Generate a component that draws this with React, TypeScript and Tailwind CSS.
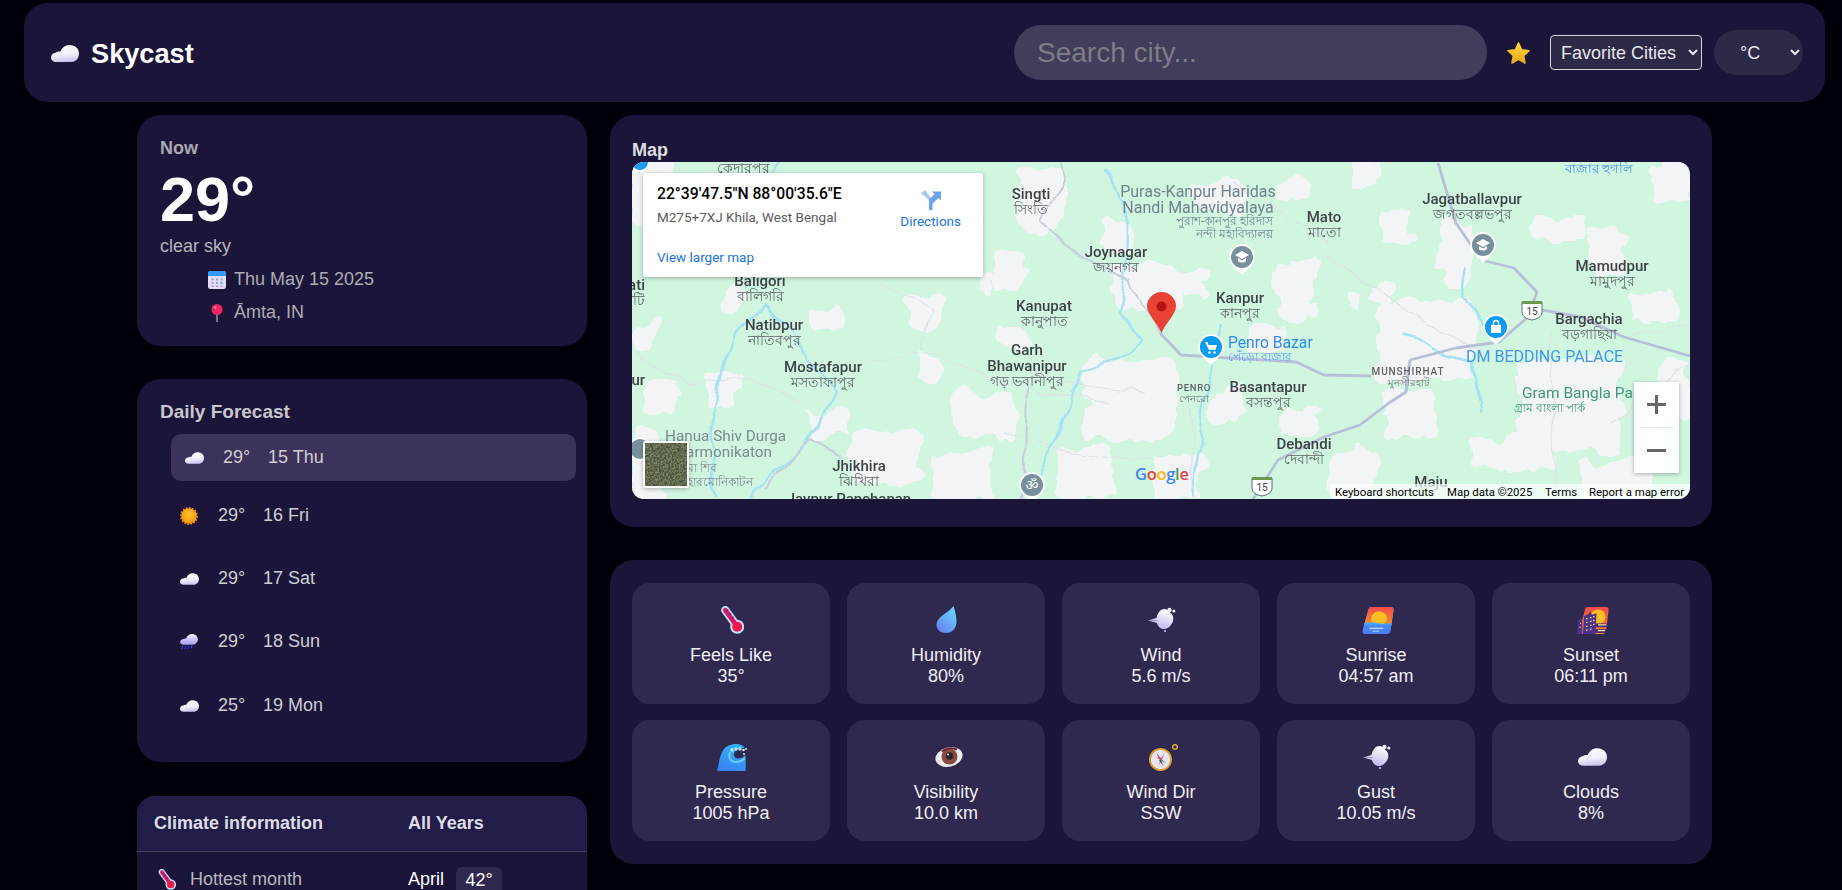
import type { ReactNode } from "react";

const SANS = "font-['Liberation_Sans',Arial,sans-serif]";

const FORECAST = [
  { icon: "cloud", temp: "29°", day: "15 Thu", active: true, mb: "mb-[11px]" },
  { icon: "sun", temp: "29°", day: "16 Fri", active: false, mb: "mb-[16px]" },
  { icon: "cloud", temp: "29°", day: "17 Sat", active: false, mb: "mb-[16px]" },
  { icon: "rain", temp: "29°", day: "18 Sun", active: false, mb: "mb-[17px]" },
  { icon: "cloud", temp: "25°", day: "19 Mon", active: false, mb: "" },
];

const STATS = [
  { icon: "thermo", size: "h-[28px] w-[25px]", label: "Feels Like", value: "35°" },
  { icon: "drop", size: "h-[28px] w-[23px]", label: "Humidity", value: "80%" },
  { icon: "wind", size: "h-[28px] w-[30px]", label: "Wind", value: "5.6 m/s" },
  { icon: "sunrise", size: "ml-[4px] h-[27px] w-[32px]", label: "Sunrise", value: "04:57 am" },
  { icon: "sunset", size: "ml-[3px] h-[27px] w-[32px]", label: "Sunset", value: "06:11 pm" },
  { icon: "wave", size: "ml-[2px] h-[27px] w-[30px]", label: "Pressure", value: "1005 hPa" },
  { icon: "eye", size: "ml-[5px] h-[22px] w-[28px]", label: "Visibility", value: "10.0 km" },
  { icon: "compass", size: "h-[27px] w-[33px]", label: "Wind Dir", value: "SSW" },
  { icon: "wind", size: "h-[28px] w-[30px]", label: "Gust", value: "10.05 m/s" },
  { icon: "cloud2", size: "ml-[3px] h-[18px] w-[29px]", label: "Clouds", value: "8%" },
];

// gradients shared by the emoji drawings
function IconDefs() {
  return (
    <svg className="absolute h-0 w-0" aria-hidden="true">
      <defs>
        <linearGradient id="g-cloud" x1="0.3" y1="0" x2="0.5" y2="1">
          <stop offset="0" stopColor="#ffffff" />
          <stop offset="0.6" stopColor="#f1edfa" />
          <stop offset="1" stopColor="#cbc1ec" />
        </linearGradient>
        <linearGradient id="g-rain" x1="0.4" y1="0" x2="0.4" y2="1">
          <stop offset="0" stopColor="#f4f0ff" />
          <stop offset="1" stopColor="#a59bf0" />
        </linearGradient>
        <radialGradient id="g-sun" cx="0.5" cy="0.4" r="0.6">
          <stop offset="0" stopColor="#fcc52b" />
          <stop offset="1" stopColor="#f0930f" />
        </radialGradient>
        <linearGradient id="g-drop" x1="0.8" y1="0.1" x2="0.2" y2="1">
          <stop offset="0" stopColor="#63d4ff" />
          <stop offset="1" stopColor="#6a7ef5" />
        </linearGradient>
        <linearGradient id="g-sky" x1="0" y1="0" x2="0" y2="1">
          <stop offset="0" stopColor="#ef4b4b" />
          <stop offset="1" stopColor="#f98b2c" />
        </linearGradient>
        <linearGradient id="g-sea" x1="0" y1="0" x2="0" y2="1">
          <stop offset="0" stopColor="#48b4ff" />
          <stop offset="1" stopColor="#4a7cf5" />
        </linearGradient>
        <linearGradient id="g-wave" x1="0.6" y1="0" x2="0.2" y2="1">
          <stop offset="0" stopColor="#2fb2f5" />
          <stop offset="1" stopColor="#3a80f6" />
        </linearGradient>
        <linearGradient id="g-star" x1="0.5" y1="0" x2="0.5" y2="1">
          <stop offset="0" stopColor="#fdd835" />
          <stop offset="1" stopColor="#e8a81c" />
        </linearGradient>
        <linearGradient id="g-wind" x1="0.7" y1="0" x2="0.3" y2="1">
          <stop offset="0" stopColor="#ffffff" />
          <stop offset="1" stopColor="#bdb0ec" />
        </linearGradient>
      </defs>
    </svg>
  );
}

function Emoji({ name, className }: { name: string; className?: string }) {
  switch (name) {
    case "cloud":
    case "cloud2":
      return (
        <svg viewBox="0 0 28 17" className={className}>
          <path
            d="M5.5 17C2 17 0 15 0 12.5 0 10 2 8 4.5 7.8 6 6.5 8 6.3 9.5 6.6 11 2.5 14.5 0 18.5 0 24 0 28 3.5 28 8.5 28 13.5 24.5 17 20 17Z"
            fill="url(#g-cloud)"
          />
          <path d="M10.5 7C9 9 9 12 10 14" fill="none" stroke="#dcd6f0" strokeWidth="0.8" />
        </svg>
      );
    case "sun":
      return (
        <svg viewBox="0 0 20 20" className={className}>
          <circle cx="10" cy="10" r="9" fill="none" stroke="#ef7d1a" strokeWidth="2" strokeDasharray="2 1.5" />
          <circle cx="10" cy="10" r="8.6" fill="url(#g-sun)" />
        </svg>
      );
    case "rain":
      return (
        <svg viewBox="0 0 20 18" className={className}>
          <path
            d="M4 12C1.5 12 0 10.8 0 9 0 7.3 1.4 6 3.2 5.8 4.2 5 5.4 4.8 6.8 5 7.8 2 10.4 0 13.4 0 17.2 0 20 2.6 20 6 20 9.6 17.4 12 14 12Z"
            fill="url(#g-rain)"
          />
          <path d="M3 13l-1 4M6.5 13l-1 4M10 13l-1 4M13.5 13l-1 3" stroke="#3d35f0" strokeWidth="1.3" />
        </svg>
      );
    case "thermo":
      return (
        <svg viewBox="-2.5 0 24 27" className={className}>
          <path d="M3.5 4 14 18.500" stroke="#bfe3f4" strokeWidth="8" strokeLinecap="round" />
          <circle cx="15" cy="20" r="6.800" fill="#bfe3f4" />
          <path d="M3.500 4 14 18.500" stroke="#d9176e" strokeWidth="4.600" strokeLinecap="round" />
          <circle cx="15" cy="20" r="4.800" fill="#f5164e" />
          <path d="M6.500 3.500l-2 1.500M9 7l-2 1.500M11.500 10.500l-2 1.500" stroke="#6b2150" strokeWidth="1.100" />
        </svg>
      );
    case "drop":
      return (
        <svg viewBox="0 0 22 28" className={className}>
          <path d="M18 0C19.500 5 21 10 21 15.500 21 22.500 16.500 27 10.500 27 5 27 1 23.500 1 19 1 14 5 11 9.500 7.500 13 5 16 3 18 0Z" fill="url(#g-drop)" />
        </svg>
      );
    case "wind":
      return (
        <svg viewBox="-2 0 30 26" className={className}>
          <path
            d="M0 13.500 8.500 11C9.500 6 12.500 2 16 2 19 1.500 20.500 4 22.500 6 25.500 8 26 12 24.500 15.500 22.500 19.500 19 22.500 15 22 11.500 21.500 9.500 18.500 9 16Z"
            fill="url(#g-wind)"
          />
          <path d="M1 13.500 9.500 13.500" stroke="#8f88b0" strokeWidth="0.8" />
          <circle cx="21.500" cy="3" r="2.200" fill="#efeaf9" />
          <circle cx="25.800" cy="4" r="1.500" fill="#ffffff" />
          <circle cx="17" cy="24" r="1.100" fill="#c9bef0" />
        </svg>
      );
    case "sunrise":
      return (
        <svg viewBox="0 0 30 28" preserveAspectRatio="none" className={className}>
          <path d="M6 2.500Q6.400 0 9 0H27Q30 0 29.600 3L26.800 25Q26.400 28 23 28H3Q0 28 .4 25Z" fill="url(#g-sea)" />
          <path d="M6 2.500Q6.400 0 9 0H27Q30 0 29.600 3L27.500 19H2Z" fill="url(#g-sky)" />
          <circle cx="16" cy="12" r="7.500" fill="#fbbf24" />
          <path d="M2.300 16.500Q8 15 14 16.500T27.800 16.500L27 21H1.500Z" fill="url(#g-sea)" />
          <path d="M7 22H20M10 25H16" stroke="#dceeff" strokeWidth="1" />
        </svg>
      );
    case "sunset":
      return (
        <svg viewBox="0 0 32 28" preserveAspectRatio="none" className={className}>
          <path d="M8 2.500Q8.400 0 11 0H29Q32 0 31.600 3L29 25Q28.600 28 25 28H5Q2 28 2.400 25Z" fill="url(#g-sky)" />
          <circle cx="21" cy="10" r="7.500" fill="#fbbf24" />
          <path d="M18 17H31L30.500 21H18ZM18 23H29.500L29 27H18Z" fill="#432c7a" />
          <path d="M21 18.500H29.500M21 24.500H28" stroke="#fde68a" strokeWidth="1.200" />
          <path d="M1 14 5 12 5.500 28H1.500Q0 28 .2 26ZM7 9.500 12 7 13 4.500 15 8 19.500 6.500 18.500 28H6Z" fill="#4e3188" />
          <path d="M3 17h1M2.500 21h1M9 12h1.500M13 11h1.500M16 10h1.500M9 16h1.500M13 15h1.500M16 14h1.500M9 20h1.500M13 19h1.500M16 18h1.500M9 24h1.500M13 23h1.500" stroke="#fde68a" strokeWidth="1.300" />
        </svg>
      );
    case "wave":
      return (
        <svg viewBox="0 0 30 27" className={className}>
          <path d="M0 27C2 20 2.500 13 5 8 8 2 14 0 19 0 23 0 26 1.500 28 4 24 3.500 18 5 17 10 16.500 13 19 15 22 14.500 25 14 27 12.500 28.500 11 28.500 17 29 22 28.500 27Z" fill="url(#g-wave)" />
          <path d="M13.500 8C11 11.500 12 16.500 17.500 18 21 18.500 25 17 28 14" fill="none" stroke="#72cdfb" strokeWidth="1.800" />
          <circle cx="15" cy="6" r="1.700" fill="#b5e6ff" />
          <circle cx="19" cy="5" r="1.700" fill="#b5e6ff" />
          <circle cx="23" cy="5" r="1.700" fill="#b5e6ff" />
          <circle cx="26.500" cy="6" r="1.300" fill="#d5f1ff" />
          <circle cx="29" cy="5" r="0.900" fill="#d5f1ff" />
          <circle cx="27" cy="10" r="0.900" fill="#d5f1ff" />
        </svg>
      );
    case "eye":
      return (
        <svg viewBox="0 0 28 22" className={className}>
          <ellipse cx="14" cy="11" rx="13.800" ry="9.600" transform="rotate(-14 14 11)" fill="#efeaf0" />
          <circle cx="14.500" cy="10.500" r="8" fill="#8c4b3c" />
          <path d="M7 5.500Q14 0 22 3.500" stroke="#6b2b33" strokeWidth="2" fill="none" />
          <circle cx="14.500" cy="10" r="3.800" fill="#2e2430" />
          <circle cx="13" cy="8.500" r="1.100" fill="#ffffff" />
        </svg>
      );
    case "compass":
      return (
        <svg viewBox="-3 0 33 27" className={className}>
          <ellipse cx="12.500" cy="15.500" rx="11.500" ry="11.500" transform="rotate(24 12.500 15.500)" fill="#dc9a28" />
          <ellipse cx="12.500" cy="15.500" rx="9.600" ry="9.600" transform="rotate(24 12.500 15.500)" fill="#e8e5ee" />
          <circle cx="27" cy="3" r="2.300" fill="none" stroke="#e2a52d" strokeWidth="1.500" />
          <path d="M12.500 16 10.500 21.500 13.500 17 18.500 19 14 15.500 16.500 10 12.500 14.500 7 12.500Z" fill="#85828f" />
          <path d="M14 15.500 8.500 9 11 15Z" fill="#e83070" />
          <path d="M12.500 15.500 15.500 22 11 16.500Z" fill="#3d3d47" />
        </svg>
      );
    case "star":
      return (
        <svg viewBox="0 0 23 22" className={className}>
          <path
            d="M11.500 1 14.600 7.800 22 8.700 16.600 13.700 18 21 11.500 17.400 5 21 6.400 13.700 1 8.700 8.400 7.800Z"
            fill="url(#g-star)"
            stroke="url(#g-star)"
            strokeWidth="1.600"
            strokeLinejoin="round"
          />
        </svg>
      );
    case "calendar":
      return (
        <svg viewBox="0 0 18 18" className={className}>
          <rect width="18" height="18" rx="2.500" fill="#e2dcf5" />
          <path d="M0 5V2.500A2.500 2.500 0 0 1 2.500 0H15.500A2.500 2.500 0 0 1 18 2.500V5Z" fill="#3498f8" />
          <path d="M3.500 7.500h2v2h-2ZM8 7.500h2v2H8ZM12.500 7.500h2v2h-2ZM3.500 11h2v2h-2ZM8 11h2v2H8ZM3.500 14.500h2v1.500h-2ZM8 14.500h2v1.500H8ZM12.500 14.500h2v1.500h-2Z" fill="#a69cc9" />
          <path d="M12.500 11h2v2h-2Z" fill="#59a9f5" />
        </svg>
      );
    case "pin":
      return (
        <svg viewBox="0 0 14 18" className={className}>
          <path d="M7 9V18" stroke="#a9a4b4" strokeWidth="1.300" />
          <circle cx="7" cy="5.500" r="5.500" fill="#f0245f" />
          <circle cx="5.200" cy="3.500" r="1.300" fill="#ff8fb1" />
        </svg>
      );
    default:
      return null;
  }
}

function Panel({ className, children }: { className?: string; children: ReactNode }) {
  return <section className={`rounded-[24px] bg-[#1b1639] ${className ?? ""}`}>{children}</section>;
}

type Lbl = [number, number, string, string?];

const PLACES: Lbl[] = [
  [399, 37, "Singti", "সিংতি"],
  [128, 124, "Baligori", "বালিগরি"],
  [142, 168, "Natibpur", "নাতিবপুর"],
  [191, 210, "Mostafapur", "মসতাফাপুর"],
  [484, 95, "Joynagar", "জয়নগর"],
  [412, 149, "Kanupat", "কানুপাত"],
  [395, 193, "Garh"],
  [395, 209, "Bhawanipur", "গড় ভবানীপুর"],
  [227, 309, "Jhikhira", "ঝিখিরা"],
  [692, 60, "Mato", "মাতো"],
  [840, 42, "Jagatballavpur", "জগতবল্লভপুর"],
  [980, 109, "Mamudpur", "মামুদপুর"],
  [608, 141, "Kanpur", "কানপুর"],
  [957, 162, "Bargachia", "বড়গাছিয়া"],
  [636, 230, "Basantapur", "বসন্তপুর"],
  [672, 287, "Debandi", "দেবান্দী"],
  [799, 325, "Maju"],
  [217, 342, "Jaypur Panchanan"],
];

// built-up areas of the tiles, as boxes that the displacement filter roughens
const PATCHES = [
  [345, 115, 360, 130], [277, 135, 310, 165], [288, 191, 306, 215], [75, 211, 106, 245],
  [177, 248, 217, 275], [324, 231, 381, 278], [367, 165, 392, 185], [385, 8, 430, 70],
  [452, 198, 545, 278], [481, 105, 545, 145], [2, 158, 24, 191], [177, 145, 209, 168],
  [13, 218, 45, 251], [90, 130, 112, 150], [528, 108, 574, 135], [646, 101, 685, 158],
  [717, 125, 731, 145], [739, 121, 757, 138], [746, 138, 842, 218], [807, 61, 842, 125],
  [885, 198, 992, 291], [749, 228, 807, 275], [842, 275, 920, 308], [957, 71, 992, 115],
  [903, 55, 957, 75], [1021, 1, 1058, 38], [721, 1, 749, 21], [649, 15, 678, 38],
  [578, 225, 617, 258], [649, 248, 685, 275], [749, 45, 778, 81], [617, 165, 653, 191],
  [220, 270, 290, 320], [300, 290, 360, 337], [425, 285, 480, 337], [520, 290, 570, 337],
  [0, 270, 30, 337], [700, 290, 745, 337], [950, 300, 1020, 337], [1000, 130, 1040, 160],
  [360, 90, 395, 125], [560, 20, 610, 50], [0, 0, 40, 60], [465, 60, 500, 90], [1030, 200, 1058, 260],
];

const ROADS = [
  "M528 171 L549 193 L596 196 L664 200 L692 213 L739 214",
  "M778 198 L824 186 L867 180 L896 155 L910 148 L949 155 L992 175 L1058 194",
  "M896 155 L905 130 L882 106 L849 98 L824 61 L806 1",
  "M621 337 L646 298 L692 275 L728 263 L757 241 L774 230 L778 198",
];
const MINOR_ROADS = [
  "M427 0 L433 18 L411 58 L431 81 L452 98 L499 118 L506 138 L531 171",
  "M134 325 L181 278 L209 293",
  "M395 225 L392 337",
];
const LANES = [
  "M0 190 L60 225 L120 215 L170 240",
  "M400 210 L460 225 L510 230",
  "M240 200 L300 190 L380 225 L480 240",
  "M690 90 L790 160 L850 190",
  "M600 20 L700 80",
  "M920 170 L925 337",
  "M560 240 L560 337",
  "M1000 170 L1058 165",
  "M980 260 L1058 200",
  "M250 120 L300 150 L290 190",
  "M370 270 L440 290 L520 300",
];
const RIVERS = [
  "M134 141 L102 171 L92 208 L77 278 L82 337",
  "M470 8 L495 41 L492 125 L488 151 L509 178 L495 191 L449 211 L427 275 L406 311",
  "M134 141 L160 170 L178 200 L205 230 L196 250 L170 290 L125 325 L118 337",
  "M150 0 L135 20",
  "M590 160 L575 220 L560 337",
  "M835 105 L830 135 L855 165",
  "M770 170 L800 190 L840 200 L850 250",
];

function PoiPin({ x, y, fill, children }: { x: number; y: number; fill: string; children?: ReactNode }) {
  return (
    <g transform={`translate(${x} ${y})`}>
      <path d="M-13 0A13 13 0 1 1 13 0C13 7 5 13 0 18-5 13-13 7-13 0Z" fill="#ffffff" opacity="0.92" />
      <circle r="11" fill={fill} />
      {children}
    </g>
  );
}

function Shield({ x, y }: { x: number; y: number }) {
  return (
    <g transform={`translate(${x} ${y})`}>
      <path d="M-10 -8H10V2C10 7 5 9 0 10-5 9-10 7-10 2Z" fill="#ffffff" stroke="#5d6d7a" strokeWidth="1" />
      <path d="M-10 -9H10V-6H-10Z" fill="#6b9a4f" />
      <text textAnchor="middle" y="5" fontSize="10" fontFamily="Roboto, sans-serif" fill="#3c4043">15</text>
    </g>
  );
}

function MapTiles() {
  return (
    <svg viewBox="0 0 1058 337" className="absolute inset-0 h-full w-full" fontFamily="Roboto, 'Noto Sans', sans-serif">
      <defs>
        <filter id="soft"><feGaussianBlur stdDeviation="0.35" /></filter>
        <filter id="rough" x="-5%" y="-5%" width="110%" height="110%">
          <feTurbulence type="fractalNoise" baseFrequency="0.035" numOctaves="3" seed="7" result="n" />
          <feDisplacementMap in="SourceGraphic" in2="n" scale="26" xChannelSelector="R" yChannelSelector="G" />
          <feGaussianBlur stdDeviation="0.7" />
        </filter>
        <filter id="wiggle" x="-5%" y="-5%" width="110%" height="110%">
          <feTurbulence type="fractalNoise" baseFrequency="0.03" numOctaves="2" seed="3" result="n" />
          <feDisplacementMap in="SourceGraphic" in2="n" scale="14" xChannelSelector="R" yChannelSelector="G" />
          <feGaussianBlur stdDeviation="0.35" />
        </filter>
      </defs>
      <rect width="1058" height="337" fill="#d0f6e0" />
      <g fill="#f2f4f6" filter="url(#rough)">
        {PATCHES.map(([a, b, c, d]) => (
          <rect key={`${a}-${b}`} x={a} y={b} width={c - a} height={d - b} rx="5" />
        ))}
      </g>
      <g fill="none" strokeLinejoin="round" filter="url(#wiggle)">
        {LANES.map((d) => <path key={d} d={d} stroke="#dde3e6" strokeWidth="1.200" />)}
        {RIVERS.map((d) => <path key={d} d={d} stroke="#a5e2f6" strokeWidth="2.400" />)}
        {MINOR_ROADS.map((d) => <path key={d} d={d} stroke="#c8cfdc" strokeWidth="2.200" />)}
      </g>
      <g fill="none" strokeLinejoin="round" filter="url(#soft)">
        {ROADS.map((d) => <path key={d} d={d} stroke="#b6c0d8" strokeWidth="2.800" />)}
      </g>
      <g filter="url(#soft)">
        {PLACES.map(([x, y, name, bn]) => (
          <g key={name} textAnchor="middle">
            <text x={x} y={y} fontSize="15" fontWeight="500" fill="#3f4347">{name}</text>
            {bn && <text x={x} y={y + 15} fontSize="14" fill="#5f6368">{bn}</text>}
          </g>
        ))}
        <text x="566" y="35" textAnchor="middle" fontSize="16" fill="#71838f">Puras-Kanpur Haridas</text>
        <text x="566" y="51" textAnchor="middle" fontSize="16" fill="#71838f">Nandi Mahavidyalaya</text>
        <text x="641" y="63" textAnchor="end" fontSize="12" fill="#71838f">পুরাশ-কানপুর হরিদাস</text>
        <text x="641" y="76" textAnchor="end" fontSize="12" fill="#71838f">নন্দী মহাবিদ্যালয়</text>
        <text x="33" y="279" fontSize="15.300" fill="#7c8a90">Hanua Shiv Durga</text>
        <text x="140" y="295" textAnchor="end" fontSize="15.300" fill="#7c8a90">Harmonikaton</text>
        <text x="55" y="310" fontSize="12" fill="#7c8a90">মা শিব</text>
        <text x="55" y="324" fontSize="12" fill="#7c8a90">হারমোনিকাটন</text>
        <text x="0" y="128" textAnchor="middle" fontSize="15" fontWeight="500" fill="#3f4347">Sati</text>
        <text x="0" y="143" textAnchor="middle" fontSize="14" fill="#5f6368">সাটি</text>
        <text x="2" y="223" textAnchor="middle" fontSize="15" fontWeight="500" fill="#3f4347">pur</text>
        <text x="111" y="11" textAnchor="middle" fontSize="14" fill="#5f6368">কেদারপুর</text>
        <text x="967" y="11" textAnchor="middle" fontSize="13" fill="#4a90e8">বাজার হুগলি</text>
        <text x="596" y="186" fontSize="15.700" fill="#2e8cf0">Penro Bazar</text>
        <text x="596" y="199" fontSize="12" fill="#5fa5f2">পেঁড়ো বাজার</text>
        <text x="834" y="200" fontSize="16" fill="#3f96f0">DM BEDDING PALACE</text>
        <text x="776" y="213" textAnchor="middle" fontSize="10" fontWeight="500" letterSpacing="0.9" fill="#5f6368">MUNSHIRHAT</text>
        <text x="776" y="224" textAnchor="middle" fontSize="10" fill="#70757a">মুনসীরহাট</text>
        <text x="562" y="229" textAnchor="middle" fontSize="9.500" fontWeight="500" letterSpacing="0.7" fill="#5f6368">PENRO</text>
        <text x="562" y="240" textAnchor="middle" fontSize="9.500" fill="#70757a">পেনরো</text>
        <text x="890" y="236" fontSize="15.500" fill="#3d9a74">Gram Bangla Park</text>
        <text x="882" y="250" fontSize="12" fill="#3d9a74">গ্রাম বাংলা পার্ক</text>
      </g>
      <PoiPin x={610} y={95} fill="#78909c">
        <path d="M-7 -2 0 -6 7 -2 0 2ZM-4 1V4C-2 6 2 6 4 4V1L0 3.500Z" fill="#ffffff" />
      </PoiPin>
      <PoiPin x={851} y={83} fill="#78909c">
        <path d="M-7 -2 0 -6 7 -2 0 2ZM-4 1V4C-2 6 2 6 4 4V1L0 3.500Z" fill="#ffffff" />
      </PoiPin>
      <PoiPin x={579} y={185} fill="#0a9cf5">
        <path d="M-6 -5H-3.500L-2.500 -2H6L4.500 3H-2Z" fill="#ffffff" />
        <circle cx="-1.500" cy="5.500" r="1.300" fill="#ffffff" />
        <circle cx="3.500" cy="5.500" r="1.300" fill="#ffffff" />
      </PoiPin>
      <PoiPin x={864} y={165} fill="#0a9cf5">
        <path d="M-5 -2H5V6H-5Z" fill="#ffffff" />
        <path d="M-2.500 -2V-4A2.500 2.500 0 0 1 2.500 -4V-2" fill="none" stroke="#ffffff" strokeWidth="1.300" />
      </PoiPin>
      <PoiPin x={400} y={323} fill="#78909c">
        <text textAnchor="middle" y="5" fontSize="14" fill="#ffffff">ॐ</text>
      </PoiPin>
      <circle cx="8" cy="0" r="9" fill="#1a9bf0" stroke="#ffffff" strokeWidth="2" />
      <circle cx="8" cy="287" r="11" fill="#78909c" stroke="#ffffff" strokeWidth="2" />
      <Shield x={900} y={148} />
      <Shield x={630} y={324} />
      <path d="M529.500 171C526 162 515 152 515 144.500A14.500 14.500 0 0 1 544 144.500C544 152 533 162 529.500 171Z" fill="#ea4335" />
      <circle cx="529.500" cy="144.500" r="5" fill="#b31412" />
      <text x="503" y="318" fontFamily="'Open Sans', sans-serif" fontSize="16.500" fontWeight="600" letterSpacing="-0.3">
        <tspan fill="#4285f4">G</tspan><tspan fill="#ea4335">o</tspan><tspan fill="#fbbc05">o</tspan>
        <tspan fill="#4285f4">g</tspan><tspan fill="#34a853">l</tspan><tspan fill="#ea4335">e</tspan>
      </text>
    </svg>
  );
}

function SatelliteThumb() {
  return (
    <svg viewBox="0 0 42 43" className="h-full w-full">
      <filter id="sat">
        <feTurbulence type="fractalNoise" baseFrequency="0.55" numOctaves="3" seed="9" />
        <feColorMatrix values="0 0 0 0 0.48  0 0 0 0 0.42  0 0 0 0 0.28  1.4 0 0 0 -0.45" />
      </filter>
      <rect width="42" height="43" fill="#43543a" />
      <rect width="42" height="43" filter="url(#sat)" />
    </svg>
  );
}

function MapEmbed() {
  return (
    <div className="relative h-[337px] overflow-hidden rounded-[12px] font-['Roboto',sans-serif]">
      <MapTiles />
      <div className="absolute left-[11px] top-[11px] flex h-[104px] w-[340px] justify-between rounded-[2px] bg-white pl-[14px] pr-[22px] pt-[11px] shadow-[0_1px_4px_rgba(0,0,0,0.3)]">
        <div className="flex flex-col">
          <p className="text-[15.700px] font-medium leading-[20px] text-black">22°39'47.5"N 88°00'35.6"E</p>
          <p className="mt-[5px] text-[13.500px] leading-[16px] text-[#5b5b5b]">M275+7XJ Khila, West Bengal</p>
          <p className="mt-[24px] text-[13.500px] leading-[16px] text-[#1a73e8]">View larger map</p>
        </div>
        <div className="flex flex-col items-center pt-[5px]">
          <svg viewBox="0 0 20 21" className="h-[21px] w-[20px]">
            <path d="M0 4 4 1 10.500 9.500V14H8V11Z" fill="#a9c9f4" />
            <path d="M8 21V10.500L13.500 5 11 2.500H20V11.500L17.500 9 11.500 14.500V21Z" fill="#6aa3ee" />
          </svg>
          <span className="mt-[3px] text-[13.500px] leading-[16px] text-[#1a73e8]">Directions</span>
        </div>
      </div>
      <div className="absolute bottom-[11px] left-[11px] h-[47px] w-[46px] rounded-[2px] border-2 border-white shadow-[0_1px_4px_rgba(0,0,0,0.3)]">
        <SatelliteThumb />
      </div>
      <div className="absolute bottom-[26px] right-[11px] flex h-[91px] w-[45px] flex-col items-center rounded-[1px] bg-white shadow-[0_1px_4px_rgba(0,0,0,0.3)]">
        <div className="relative h-[45px] w-full">
          <span className="absolute left-[13px] top-[21px] h-[3px] w-[19px] bg-[#666666]" />
          <span className="absolute left-[21px] top-[13px] h-[19px] w-[3px] bg-[#666666]" />
        </div>
        <span className="h-px w-[34px] bg-[#e6e6e6]" />
        <div className="relative h-[45px] w-full">
          <span className="absolute left-[13px] top-[21px] h-[3px] w-[19px] bg-[#666666]" />
        </div>
      </div>
      <div className="absolute bottom-0 right-0 flex h-[15px] w-[360px] items-center bg-white/70 pl-[5px] pt-[2px] text-[11.400px] text-black">
        <span className="w-[112px]">Keyboard shortcuts</span>
        <span className="w-[98px]">Map data ©2025</span>
        <span className="w-[44px]">Terms</span>
        <span>Report a map error</span>
      </div>
    </div>
  );
}

function Header() {
  return (
    <header className="ml-6 mt-[3px] flex h-[99px] w-[1801px] items-center justify-between rounded-[24px] bg-[#1b1639] pl-[27px] pr-[22px]">
      <div className="flex items-center gap-3 pt-[2px]">
        <Emoji name="cloud" className="h-[17px] w-[28px]" />
        <span className="text-[27.200px] font-bold leading-none text-white">Skycast</span>
      </div>
      <div className="flex items-center">
        <input
          placeholder="Search city..."
          className="h-[55px] w-[473px] rounded-[28px] bg-[#433d5c] pl-[23px] text-[28px] text-white outline-none placeholder:text-[#7e7c85]"
        />
        <Emoji name="star" className="ml-[20px] h-[22px] w-[23px]" />
        <select className="ml-[20px] h-[35px] w-[152px] rounded-[4px] border border-[#d5d3dd] bg-[#2d2a47] pl-[6px] text-[18px] text-[#e8e6ee]">
          <option>Favorite Cities</option>
        </select>
        <select className="ml-3 h-[45px] w-[89px] rounded-[24px] bg-[#2d2a47] pl-[22px] text-[18px] text-[#e8e6ee]">
          <option>°C</option>
        </select>
      </div>
    </header>
  );
}

function NowCard() {
  return (
    <Panel className="h-[231px] pl-[23px] pt-[23px]">
      <p className="text-[18px] font-bold leading-5 text-[#aaa9b2]">Now</p>
      <p className="mt-[4px] text-[63px] font-bold leading-[74px] text-white">29°</p>
      <p className="text-[18px] leading-[21px] text-[#b5b4bc]">clear sky</p>
      <div className="mt-[12px] flex items-center gap-2 pl-[48px] text-[18px] leading-[21px] text-[#adacb4]">
        <Emoji name="calendar" className="h-[18px] w-[18px]" />
        Thu May 15 2025
      </div>
      <div className="mt-[12px] flex items-center gap-2 pl-[48px] text-[18px] leading-[21px] text-[#adacb4]">
        <span className="flex w-[18px] justify-center"><Emoji name="pin" className="h-[18px] w-[14px]" /></span>
        Āmta, IN
      </div>
    </Panel>
  );
}

function ForecastCard() {
  return (
    <Panel className="h-[383px] pl-[23px] pt-[22px]">
      <h2 className="text-[19px] font-bold leading-[22px] text-[#c8c6ce]">Daily Forecast</h2>
      <ul className="ml-[11px] mr-[11px] mt-[11px]">
        {FORECAST.map((row) => (
          <li
            key={row.day}
            className={`flex h-[47px] items-center rounded-[10px] text-[18px] leading-[21px] text-[#cfcdd4] ${row.mb} ${row.active ? "bg-[#3d3259] pl-[14px]" : "pl-[9px]"}`}
          >
            {row.icon === "sun" ? (
              <Emoji name="sun" className="h-[18px] w-[18px]" />
            ) : row.icon === "rain" ? (
              <Emoji name="rain" className="h-[16px] w-[18px]" />
            ) : (
              <Emoji name="cloud" className="h-[12px] w-[19px]" />
            )}
            <span className={`${row.icon === "cloud" ? "ml-[19px]" : "ml-[20px]"} w-[45px]`}>{row.temp}</span>
            {row.day}
          </li>
        ))}
      </ul>
    </Panel>
  );
}

function ClimateCard() {
  return (
    <section className="mt-px overflow-hidden rounded-[18px] bg-[#1b1639]">
      <div className="flex h-[56px] items-center border-b border-[#45415f] bg-[#221c48] pl-[17px] text-[18px] font-bold text-[#dedde3]">
        <span className="w-[254px]">Climate information</span>
        All Years
      </div>
      <div className="flex h-[54px] items-center pl-[20px] text-[18px]">
        <Emoji name="thermo" className="h-[21px] w-[19px]" />
        <span className="ml-[14px] w-[218px] text-[#b8b7bf]">Hottest month</span>
        <span className="text-white">April</span>
        <span className="ml-[12px] mt-[3px] flex h-[28px] w-[46px] items-center justify-center rounded-[6px] bg-[#2f284f] text-white">42°</span>
      </div>
    </section>
  );
}

export default function App() {
  return (
    <div className={`h-[890px] overflow-hidden bg-[#00000a] ${SANS}`}>
      <IconDefs />
      <Header />
      <main className="ml-[137px] mt-[13px] flex w-[1575px] gap-[23px]">
        <div className="flex w-[450px] flex-col gap-[33px]">
          <NowCard />
          <ForecastCard />
          <ClimateCard />
        </div>
        <div className="flex w-[1102px] flex-col gap-[33px]">
          <Panel className="h-[412px] px-[22px] pt-[23px]">
            <h2 className="h-[24px] text-[18px] font-bold leading-[24px] text-[#dedde3]">Map</h2>
            <MapEmbed />
          </Panel>
          <Panel className="h-[304px] px-[22px] pt-[23px]">
            <div className="grid grid-cols-5 gap-x-[17px] gap-y-[16px]">
              {STATS.map((s) => (
                <div key={s.label} className="flex h-[121px] flex-col items-center rounded-[18px] bg-[#2f284f] pt-[22px] text-[18px] leading-[21px] text-[#f0eff4]">
                  <span className="flex h-[30px] items-center justify-center">
                    <Emoji name={s.icon} className={s.size} />
                  </span>
                  <span className="mt-[10px]">{s.label}</span>
                  <span>{s.value}</span>
                </div>
              ))}
            </div>
          </Panel>
        </div>
      </main>
    </div>
  );
}
